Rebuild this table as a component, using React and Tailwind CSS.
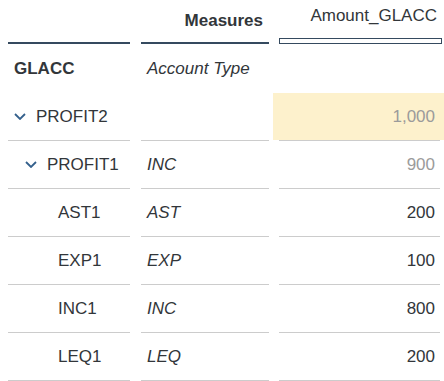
const rows = [
  { name: "PROFIT2", level: 0, node: true, type: "", value: "1,000", dim: true, hl: true },
  { name: "PROFIT1", level: 1, node: true, type: "INC", value: "900", dim: true },
  { name: "AST1", level: 2, type: "AST", value: "200" },
  { name: "EXP1", level: 2, type: "EXP", value: "100" },
  { name: "INC1", level: 2, type: "INC", value: "800" },
  { name: "LEQ1", level: 2, type: "LEQ", value: "200" },
];

const pads = ["pl-[6px]", "pl-[17px]", "pl-[28px]"];

function Chevron() {
  return (
    <svg width="12" height="7" viewBox="0 0 12 7" className="shrink-0">
      <path d="M1 1 L6 6 L11 1" fill="none" stroke="#34608c" strokeWidth="1.8" />
    </svg>
  );
}

export default function App() {
  return (
    <div className="w-[444px] h-[381px] bg-white text-[17px] text-[#32363a] overflow-hidden" style={{ fontFamily: '"Liberation Sans", Arial, sans-serif' }}>
      {/* header */}
      <div className="flex h-[45px]">
        <div className="ml-2 w-[122px] flex flex-col">
          <div className="flex-1" />
          <div className="h-[2px] bg-[#354a5f]" />
          <div className="h-px" />
        </div>
        <div className="ml-[11px] w-[128px] flex flex-col">
          <div className="flex-1 flex items-center justify-end pr-[6px] font-bold">Measures</div>
          <div className="h-[2px] bg-[#354a5f]" />
          <div className="h-px" />
        </div>
        <div className="ml-[10px] w-[163px] flex flex-col">
          <div className="flex-1 flex items-center justify-end pr-[5px] pb-[6px]">Amount_GLACC</div>
          <div className="h-[6px] border border-[#354a5f] mb-px" />
        </div>
      </div>

      {/* dimension header */}
      <div className="flex h-12 items-center">
        <div className="ml-2 w-[122px] pl-[6px] font-bold">GLACC</div>
        <div className="ml-[11px] w-[128px] pl-[6px] italic">Account Type</div>
      </div>

      {rows.map((r) => (
        <div key={r.name} className="flex h-12">
          <div className="ml-2 w-[122px] flex flex-col">
            <div className={`flex-1 flex items-center ${pads[r.level]}`}>
              <div className="w-[22px] shrink-0 flex items-center">{r.node && <Chevron />}</div>
              <span>{r.name}</span>
            </div>
            <div className="h-px bg-[#cccccc]" />
          </div>
          <div className="ml-[11px] w-[128px] flex flex-col">
            <div className="flex-1 flex items-center pl-[6px] italic">{r.type}</div>
            <div className="h-px bg-[#cccccc]" />
          </div>
          <div className="ml-[4px] flex-1 flex flex-col">
            <div className={`flex-1 flex items-center justify-end pr-[9px] ${r.hl ? "bg-[#fdf1cc]" : ""} ${r.dim ? "text-[#9b9b9b]" : ""}`}>
              {r.value}
            </div>
            <div className="ml-[6px] mr-[4px] h-px bg-[#cccccc]" />
          </div>
        </div>
      ))}
    </div>
  );
}
